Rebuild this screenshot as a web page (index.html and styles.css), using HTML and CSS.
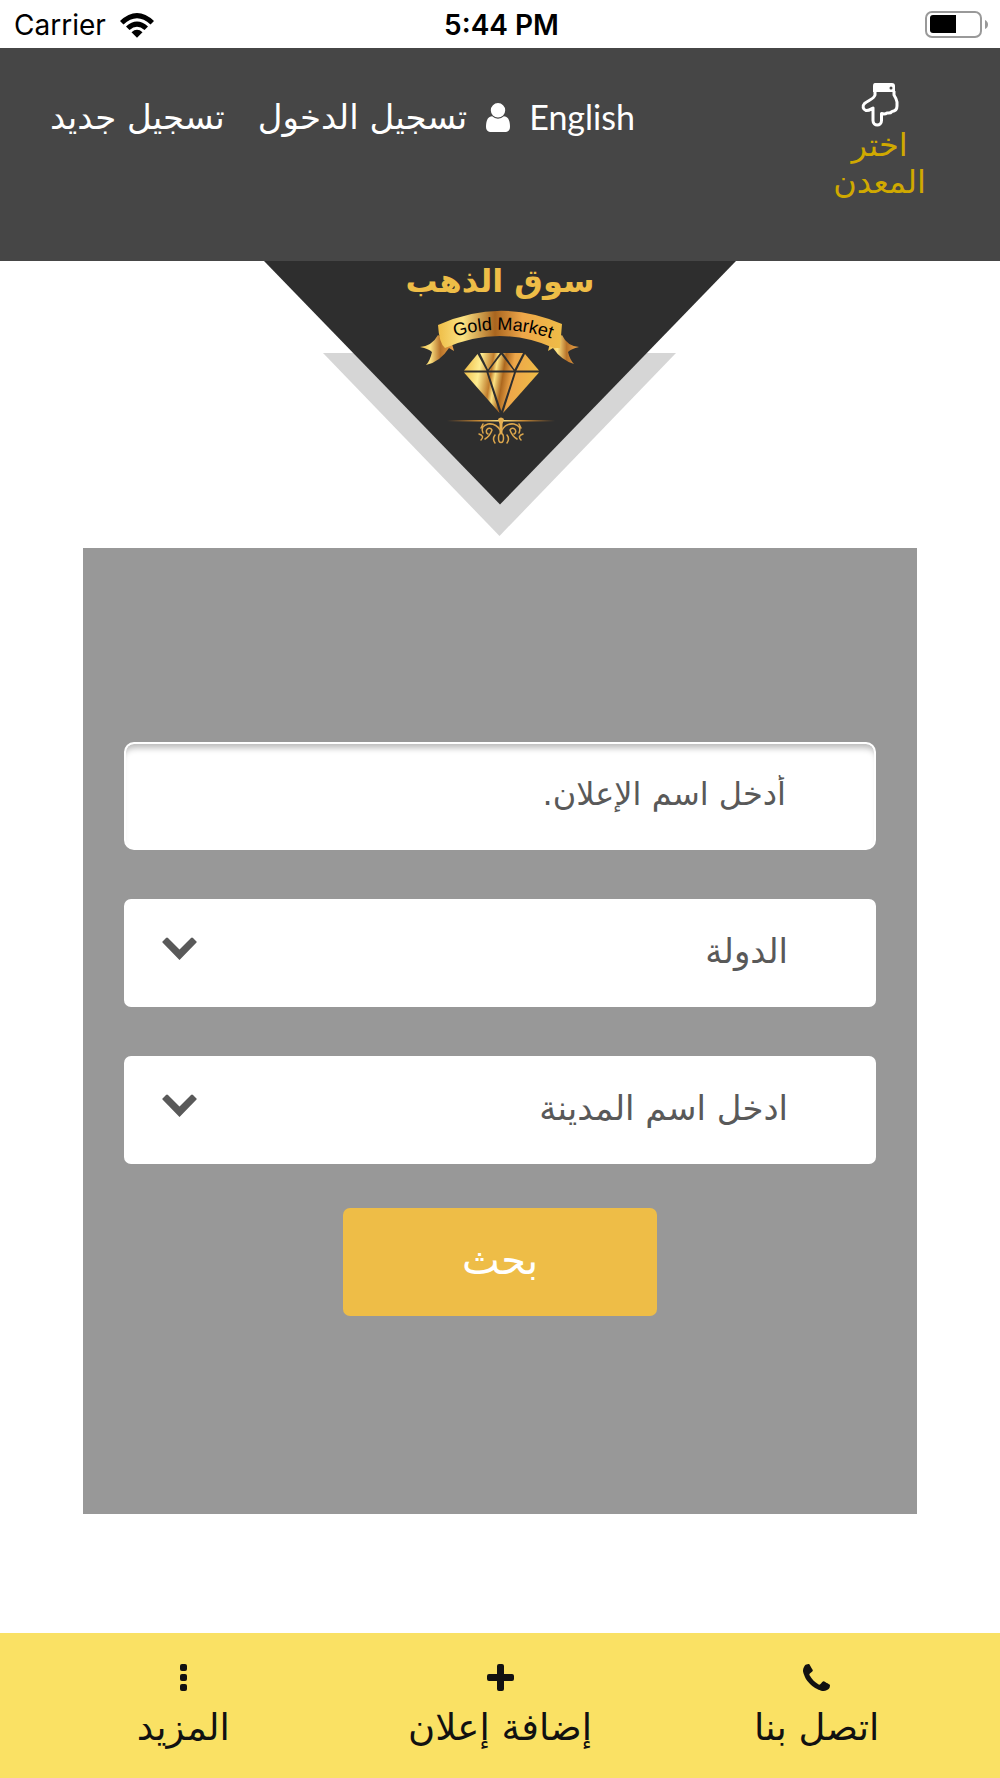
FILE: index.html
```html
<!DOCTYPE html>
<html lang="ar" dir="rtl">
<head>
<meta charset="utf-8">
<meta name="viewport" content="width=device-width, initial-scale=1">
<title>سوق الذهب</title>
<link rel="stylesheet" href="styles.css">
</head>
<body>
<div class="status" dir="ltr">
  <div class="status-carrier">
    <span>Carrier</span>
    <svg class="wifi" viewBox="0 0 34 25" aria-hidden="true">
      <path d="M0 8Q17-8 34 8L30.500 11.500Q17-1 3.500 11.500Z"/>
      <path d="M6 13.500Q17 3.500 28 13.500L24.500 17Q17 10.500 9.500 17Z"/>
      <path d="M11.500 19.200Q17 14.500 22.500 19.200L17 24.700Z"/>
    </svg>
  </div>
  <div class="status-time">5:44 PM</div>
  <svg class="battery" viewBox="0 0 64 28" aria-hidden="true">
    <rect x="1" y="1" width="55" height="25" rx="6" fill="none" stroke="#999" stroke-width="2"/>
    <path d="M8 4h23v18H8q-3 0-3-3V7q0-3 3-3z"/>
    <path d="M60 9q3 1.500 3 4.500t-3 4.500z" fill="#999"/>
  </svg>
</div>

<header class="header">
  <a class="metal" href="#">
    <svg class="hand" viewBox="0 0 38 45" aria-hidden="true">
      <path d="M14 1h17q3 0 3 3v6H12V4q0-3 2-3z" fill="#fff"/>
      <path d="M14 9v4C13 17 8 18 3.500 21.500C1 24 2 27.500 5 28.500C8 29 10 27 12 26V38.500C12 44.500 20.500 44.500 20.500 38.500V31.500Q24 32.500 26 31Q29.500 31.500 31 29.500Q36 29 36 24V20Q35 16 33 13V9" fill="none" stroke="#fff" stroke-width="3" stroke-linejoin="round"/>
      <circle cx="30" cy="6" r="1.500" fill="#464646"/>
    </svg>
    <span>اختر</span>
    <span>المعدن</span>
  </a>
  <nav class="account">
    <a class="lang" href="#" lang="en">English</a>
    <svg class="user" viewBox="256 128 1280 1536" aria-hidden="true"><path d="M1536 1399q0 109-62.500 187t-150.500 78h-854q-88 0-150.500-78t-62.500-187q0-85 8.500-160.500t31.500-152 58.500-131 94-89 134.500-34.500q131 128 313 128t313-128q76 0 134.500 34.500t94 89 58.500 131 31.500 152 8.500 160.500zm-256-887q0 159-112.500 271.500t-271.500 112.500-271.500-112.500-112.500-271.500 112.500-271.500 271.500-112.500 271.500 112.500 112.500 271.500z"/></svg>
    <a class="login" href="#">تسجيل الدخول</a>
    <a class="register" href="#">تسجيل جديد</a>
  </nav>
</header>

<main>
  <svg class="logo" viewBox="0 11 500 275" role="img" aria-label="سوق الذهب Gold Market">
    <defs>
      <linearGradient id="band" x1="0" x2="1">
        <stop offset="0" stop-color="#eebd47"/><stop offset=".2" stop-color="#fce383"/>
        <stop offset=".46" stop-color="#a9651f"/><stop offset=".68" stop-color="#eea649"/>
        <stop offset="1" stop-color="#eebd47"/>
      </linearGradient>
      <linearGradient id="gem" gradientUnits="userSpaceOnUse" x1="214" y1="118" x2="289" y2="130">
        <stop offset="0" stop-color="#eebd47"/><stop offset=".2" stop-color="#feed91"/>
        <stop offset=".36" stop-color="#c07c2c"/><stop offset=".42" stop-color="#fce383"/>
        <stop offset=".52" stop-color="#ad681f"/><stop offset=".64" stop-color="#eea649"/>
        <stop offset="1" stop-color="#eebd47"/>
      </linearGradient>
      <linearGradient id="tail" x1="0" x2="1">
        <stop offset="0" stop-color="#eebd47"/><stop offset=".3" stop-color="#fce383"/>
        <stop offset=".6" stop-color="#b8732a"/><stop offset="1" stop-color="#eea649"/>
      </linearGradient>
      <linearGradient id="rule" x1="0" x2="1">
        <stop offset="0" stop-color="#b8732a" stop-opacity="0"/><stop offset=".3" stop-color="#c98c36"/>
        <stop offset=".5" stop-color="#fce383"/><stop offset=".7" stop-color="#c98c36"/>
        <stop offset="1" stop-color="#b8732a" stop-opacity="0"/>
      </linearGradient>
      <path id="arc" d="M200 88Q252 71 306 90"/>
    </defs>
    <path fill="#d6d6d6" d="M73 103H426L249.500 286Z"/>
    <path fill="#2e2e2e" d="M14 11H486L250 254.500Z"/>
    <text class="logo-ar" x="250" y="42" text-anchor="middle">سوق الذهب</text>
    <path fill="url(#tail)" d="M188 85Q182 96 170 97Q179 99 182 102Q180 111 176 115Q190 112 199 98L204 101L202 94Z"/>
    <path fill="url(#tail)" d="M312 85Q317 96 329 97Q321 99 318 102Q320 110 324 114Q311 110 303 98L298 101L300 93Z"/>
    <path fill="url(#band)" d="M188 75Q250 47 312 74L310 98H304Q250 74 195 98Q189 93 188 75Z"/>
    <text class="logo-en"><textPath href="#arc" startOffset="50%" text-anchor="middle">Gold Market</textPath></text>
    <g fill="url(#gem)">
      <path d="M227.500 104L236.500 120.500H214Z"/><path d="M230 103H250L238 119.500Z"/>
      <path d="M251.300 104.500L263.500 120.500H239Z"/><path d="M253 103H273L264.500 119.500Z"/>
      <path d="M275 104L289 120.500H266.500Z"/>
      <path d="M214 122.500H236.500L249.500 163Z"/><path d="M238.500 122.500H264L251.300 161Z"/><path d="M266 122.500H289L253 163Z"/>
    </g>
    <path fill="url(#rule)" d="M197 170h108v1.500H197z"/>
    <path d="M248 169q3-3 6 0l-1.500 5v9h-3v-9z" fill="#e6b052"/>
    <g fill="none" stroke="#dba64c" stroke-width="1.500" stroke-linecap="round">
      <path d="M250 180Q246 173 238 174Q230 176 233 183M238 184A3 3 0 1 1 242 180Q240 186 235 189M229 184Q235 186 231 190M245 185Q242 189 245 193M231 178L233 174"/>
      <path d="M252 180Q256 173 264 174Q272 176 269 183M264 184A3 3 0 1 0 260 180Q262 186 267 189M273 184Q267 186 271 190M257 185Q260 189 257 193M271 178L269 174"/>
      <ellipse cx="251" cy="188" rx="2.500" ry="4.500"/>
    </g>
  </svg>

  <form class="search">
    <input class="field text" type="text" aria-label="أدخل اسم الإعلان" placeholder="أدخل اسم الإعلان.">
    <div class="pick">
      <select class="field" aria-label="الدولة"><option>الدولة</option></select>
      <svg class="chevron" viewBox="0 0 35 23" aria-hidden="true"><path d="M4 1Q5 0 6 1L17.500 12.500 29 1Q30 0 31 1L34.500 4.500Q35 5 34.500 5.500L17.500 23 .5 5.500Q0 5 .5 4.500z"/></svg>
    </div>
    <div class="pick">
      <select class="field" aria-label="ادخل اسم المدينة"><option>ادخل اسم المدينة</option></select>
      <svg class="chevron" viewBox="0 0 35 23" aria-hidden="true"><path d="M4 1Q5 0 6 1L17.500 12.500 29 1Q30 0 31 1L34.500 4.500Q35 5 34.500 5.500L17.500 23 .5 5.500Q0 5 .5 4.500z"/></svg>
    </div>
    <button class="submit" type="submit">بحث</button>
  </form>
</main>

<footer class="tabs">
  <a class="tab" href="#">
    <svg viewBox="192 128 1408 1408" aria-hidden="true"><path d="M1600 1240q0 27-10 70.500t-21 68.500q-21 50-122 106-94 51-186 51-27 0-53-3.500t-57.500-12.500-47-14.500-55.500-20.500-49-18q-98-35-175-83-127-79-264-216t-216-264q-48-77-83-175-3-9-18-49t-20.500-55.500-14.500-47-12.500-57.500-3.500-53q0-92 51-186 56-101 106-122 25-11 68.500-21t70.500-10q14 0 21 3 18 6 53 76 11 19 30 54t35 63.500 31 53.500q3 4 17.500 25t21.500 35.500 7 28.500q0 20-28.500 50t-62 55-62 53-28.500 46q0 9 5 22.500t8.500 20.500 14 24 11.500 19q76 137 174 235t235 174q2 1 19 11.500t24 14 20.500 8.500 22.500 5q18 0 46-28.500t53-62 55-62 50-28.500q14 0 28.500 7t35.500 21.500 25 17.500q25 15 53.500 31t63.500 35 54 30q70 35 76 53 3 7 3 21z"/></svg>
    <span>اتصل بنا</span>
  </a>
  <a class="tab" href="#">
    <svg viewBox="0 0 27 27" aria-hidden="true"><path d="M12 0h3q2 0 2 2v8h8q2 0 2 2v3q0 2-2 2h-8v8q0 2-2 2h-3q-2 0-2-2v-8H2q-2 0-2-2v-3q0-2 2-2h8V2q0-2 2-2z"/></svg>
    <span>إضافة إعلان</span>
  </a>
  <a class="tab" href="#">
    <svg viewBox="0 0 27 27" aria-hidden="true"><rect x="10" width="7" height="7" rx="2"/><rect x="10" y="10" width="7" height="7" rx="2"/><rect x="10" y="20" width="7" height="7" rx="2"/></svg>
    <span>المزيد</span>
  </a>
</footer>
</body>
</html>
```

FILE: styles.css
```css
* { box-sizing: border-box; }

body {
  margin: 0;
  min-height: 100vh;
  display: flex;
  flex-direction: column;
  background: #fff;
  font-family: "DejaVu Sans", sans-serif;
  font-size: 34px;
}

a { color: inherit; text-decoration: none; }
svg { display: block; flex: none; }

.status {
  display: grid;
  grid-template-columns: 1fr auto 1fr;
  align-items: center;
  height: 48px;
  padding: 2px 11px 0 14px;
  color: #000;
  font: 28px/32px Inter, sans-serif;
}
.status-carrier { display: flex; align-items: center; gap: 14px; }
.status-time { font-weight: 600; }
.wifi { width: 34px; height: 25px; }
.battery { width: 64px; height: 28px; justify-self: end; }

.header {
  display: flex;
  justify-content: space-between;
  align-items: flex-start;
  min-height: 213px;
  padding: 34px 74px 0 50px;
  background: #464646;
  color: #fff;
}
.metal {
  display: flex;
  flex-direction: column;
  align-items: center;
  color: #d0a900;
  font-size: 32px;
  line-height: 37px;
}
.hand { width: 38px; height: 45px; }
.account {
  display: flex;
  align-items: center;
  padding-top: 15px;
  line-height: 40px;
}
.lang { font-family: Lato, sans-serif; }
.user { width: 24px; height: 29px; margin: 0 19px; fill: #fff; }
.register { margin-right: 33px; }

main { flex: 1; }
.logo { width: 500px; max-width: 100%; margin: 0 auto 12px; }
.logo-ar { fill: #eebd47; font: bold 32px "DejaVu Sans", sans-serif; }
.logo-en { fill: #000; font: 18px "Liberation Sans", sans-serif; direction: ltr; }

.search {
  display: flex;
  flex-direction: column;
  gap: 49px;
  margin: 0 83px;
  padding: 194px 41px 198px;
  background: #989898;
}
.field {
  display: block;
  width: 100%;
  height: 108px;
  padding: 0 88px 4px;
  border: 0;
  border-radius: 7px;
  appearance: none;
  background: #fff;
  color: #595959;
  font: 34px/60px "DejaVu Sans", sans-serif;
}
.field::placeholder { color: #595959; opacity: 1; }
.text {
  border: 2px solid #fff;
  border-radius: 10px;
  box-shadow: inset 0 8px 6px -4px #bbb;
  padding: 0 80px 4px;
  font-size: 32px;
  text-indent: 8px;
}
.pick { position: relative; }
.chevron {
  position: absolute;
  left: 38px;
  top: 38px;
  width: 35px;
  height: 23px;
  fill: #595959;
}
.submit {
  align-self: center;
  width: 314px;
  height: 108px;
  margin-top: -5px;
  padding: 0 0 4px;
  border: 0;
  border-radius: 7px;
  background: #eebd47;
  color: #fff;
  font: 40px "DejaVu Sans", sans-serif;
}

.tabs {
  display: grid;
  grid-template-columns: repeat(3, 1fr);
  min-height: 145px;
  padding: 31px 25px 0;
  background: #fae164;
  color: #111;
}
.tab {
  display: flex;
  flex-direction: column;
  align-items: center;
  gap: 17px;
  font-size: 37px;
  line-height: 40px;
}
.tab svg { width: 27px; height: 27px; fill: #111; }
```
